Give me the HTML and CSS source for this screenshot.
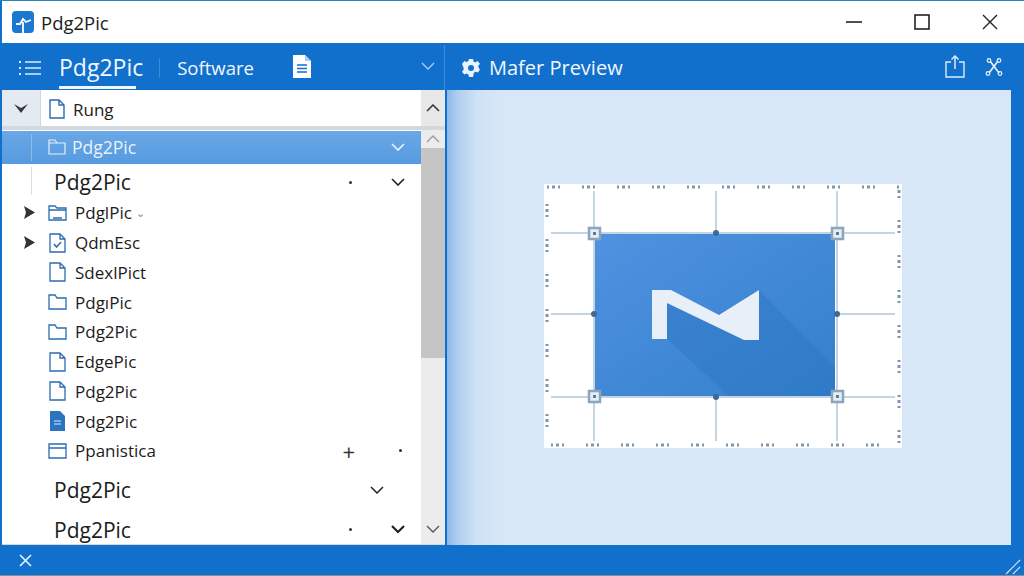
FILE: index.html
```html
<!DOCTYPE html>
<html lang="en">
<head>
    <meta charset="UTF-8">
    <title>Pdg2Pic</title>
    <link rel="stylesheet" href="styles.css">
</head>
<body>
<div class="window">
    <div class="titlebar">
        <svg class="app-logo" width="22" height="22" viewBox="0 0 22 22">
            <rect width="22" height="22" rx="4" fill="#1a78d0"/>
            <path d="M4 13h4l3-5 3 3 5-2M11 11v11" fill="none" stroke="#fff" stroke-width="1.800"/>
        </svg>
        <span class="app-name">Pdg2Pic</span>
        <div class="win-buttons">
            <svg width="16" height="16" viewBox="0 0 16 16"><path d="M0 8h16" stroke="#222" stroke-width="1.6"/></svg>
            <svg width="16" height="16" viewBox="0 0 16 16"><rect x="1" y="1" width="14" height="14" fill="none" stroke="#222" stroke-width="1.6"/></svg>
            <svg width="16" height="16" viewBox="0 0 16 16"><path d="M1 1l14 14M15 1L1 15" stroke="#222" stroke-width="1.4"/></svg>
        </div>
    </div>

    <div class="toolbar">
        <div class="tools-left">
            <svg class="list-icon" width="24" height="18" viewBox="0 0 24 18">
                <path d="M7 3h16M7 9h16M7 15h16" stroke="#dcebfa" stroke-width="1.6"/>
                <path d="M1 3h2M1 9h2M1 15h2" stroke="#dcebfa" stroke-width="2.2"/>
            </svg>
            <span class="tab tab-active">Pdg2Pic</span>
            <span class="tab-sep"></span>
            <span class="tab">Software</span>
            <svg class="doc-icon" width="18" height="23" viewBox="0 0 18 23">
                <path d="M0 0h12l6 6v17H0z" fill="#fff"/>
                <path d="M12 0v6h6" fill="#a9cdf0"/>
                <path d="M4 10h10M4 13.5h10M4 17h10" stroke="#1170cc" stroke-width="1.3"/>
            </svg>
            <svg class="tools-chevron" width="14" height="8" viewBox="0 0 14 8"><path d="M1 1l6 6 6-6" fill="none" stroke="#a9cdf0" stroke-width="1.4"/></svg>
        </div>
        <div class="tools-right">
            <svg width="18" height="18" viewBox="0 0 18 18">
                <path d="M7 0h4l.5 2.600 1.800.8L15.500 2l2.500 2.800-1.700 2 .3 2 1.400 1.800-2 3-2.500-.8-1.600 1L11 18H7l-.6-2.600-1.700-.9-2.400 1L0 12.800l1.600-2v-2L0 5l2.300-3 2.400 1 1.700-.9z" fill="#eaf3fc"/>
                <circle cx="9" cy="9" r="3" fill="#1170cc"/>
            </svg>
            <span class="preview-title">Mafer Preview</span>
            <div class="preview-tools">
                <svg width="20" height="23" viewBox="0 0 20 23">
                    <path d="M6 7H1v15h18V7h-5" fill="none" stroke="#dcebfa" stroke-width="1.4"/>
                    <path d="M10 14V1M6.500 4.500L10 1l3.500 3.500" fill="none" stroke="#dcebfa" stroke-width="1.500"/>
                </svg>
                <svg width="18" height="18" viewBox="0 0 18 18">
                    <path d="M5 3l9 12M13 3L4 15" stroke="#eaf3fc" stroke-width="1.600"/>
                    <circle cx="4" cy="2.500" r="1.800" fill="none" stroke="#eaf3fc" stroke-width="1.200"/>
                    <circle cx="14" cy="2.500" r="1.800" fill="none" stroke="#eaf3fc" stroke-width="1.200"/>
                    <circle cx="3" cy="15.500" r="1.800" fill="none" stroke="#eaf3fc" stroke-width="1.200"/>
                    <circle cx="15" cy="15.500" r="1.800" fill="none" stroke="#eaf3fc" stroke-width="1.200"/>
                </svg>
            </div>
        </div>
    </div>

    <div class="main">
        <div class="left-pane">
            <div class="path-row">
                <div class="path-arrow">
                    <svg width="14" height="9" viewBox="0 0 14 9"><path d="M0 0l7 4 7-4-7 9z" fill="#3a3a3a"/></svg>
                </div>
                <div class="path-field">
                    <svg width="16" height="20" viewBox="0 0 16 20"><path d="M1 1h9l5 5v13H1z M10 1v5h5" fill="none" stroke="#2c6cb0" stroke-width="1.400"/></svg>
                    <span>Rung</span>
                </div>
                <div class="path-scroll">
                    <svg width="14" height="8" viewBox="0 0 14 8"><path d="M1 7l6-6 6 6" fill="none" stroke="#333" stroke-width="1.500"/></svg>
                </div>
            </div>

            <div class="list-area">
                <div class="file-list">
                    <div class="row-selected">
                        <svg width="18" height="16" viewBox="0 0 18 16"><path d="M1 1h6l2 3h8v11H1zM1 4h8" fill="none" stroke="#e4effa" stroke-width="1.200"/></svg>
                        <span>Pdg2Pic</span>
                        <svg class="chev" width="14" height="8" viewBox="0 0 14 8"><path d="M1 1l6 6 6-6" fill="none" stroke="#eef5fc" stroke-width="1.600"/></svg>
                    </div>
                    <div class="row-big row-first">
                        <span>Pdg2Pic</span>
                        <i class="dot"></i>
                        <svg class="chev" width="14" height="8" viewBox="0 0 14 8"><path d="M1 1l6 6 6-6" fill="none" stroke="#222" stroke-width="1.600"/></svg>
                    </div>

                    <div class="tree">
                        <div class="row">
                            <svg class="caret" width="11" height="13" viewBox="0 0 11 13"><path d="M0 0l11 6.500L0 13l2-6.500z" fill="#333"/></svg>
                            <svg width="19" height="16" viewBox="0 0 19 16"><path d="M1 1h6l2 2h9v12H1zM1 5h17M5 13h9" fill="none" stroke="#2c6cb0" stroke-width="1.300"/></svg>
                            <span>PdglPic</span>
                            <span class="tiny">⌄</span>
                        </div>
                        <div class="row">
                            <svg class="caret" width="11" height="13" viewBox="0 0 11 13"><path d="M0 0l11 6.500L0 13l2-6.500z" fill="#333"/></svg>
                            <svg width="19" height="20" viewBox="0 0 19 20"><path d="M2 1h10l5 5v13H2zM12 1v5h5" fill="none" stroke="#2c6cb0" stroke-width="1.300"/><path d="M6 11l2.500 3L13 9" fill="none" stroke="#2c6cb0" stroke-width="1.500"/></svg>
                            <span>QdmEsc</span>
                        </div>
                        <div class="row">
                            <svg width="19" height="20" viewBox="0 0 19 20"><path d="M2 1h10l5 5v13H2zM12 1v5h5" fill="none" stroke="#2c6cb0" stroke-width="1.300"/></svg>
                            <span>SdexlPict</span>
                        </div>
                        <div class="row">
                            <svg width="19" height="16" viewBox="0 0 19 16"><path d="M1 1h6l2 3h9v11H1z" fill="none" stroke="#2c6cb0" stroke-width="1.300"/></svg>
                            <span>PdgıPic</span>
                        </div>
                        <div class="row">
                            <svg width="19" height="16" viewBox="0 0 19 16"><path d="M1 1h6l2 3h9v11H1z" fill="none" stroke="#2c6cb0" stroke-width="1.300"/></svg>
                            <span>Pdg2Pic</span>
                        </div>
                        <div class="row">
                            <svg width="19" height="20" viewBox="0 0 19 20"><path d="M2 1h10l5 5v13H2zM12 1v5h5" fill="none" stroke="#2c6cb0" stroke-width="1.300"/></svg>
                            <span>EdgePic</span>
                        </div>
                        <div class="row">
                            <svg width="19" height="20" viewBox="0 0 19 20"><path d="M2 1h10l5 5v13H2zM12 1v5h5" fill="none" stroke="#2c6cb0" stroke-width="1.300"/></svg>
                            <span>Pdg2Pic</span>
                        </div>
                        <div class="row">
                            <svg width="19" height="20" viewBox="0 0 19 20"><path d="M2 0h10l5 5v15H2z" fill="#2c74bf"/><path d="M6 10h7M6 13h7" stroke="#dcebfa" stroke-width="1.200"/></svg>
                            <span>Pdg2Pic</span>
                        </div>
                        <div class="row row-last">
                            <svg width="19" height="16" viewBox="0 0 19 16"><path d="M1 1h17v14H1zM1 5h17" fill="none" stroke="#2c6cb0" stroke-width="1.300"/></svg>
                            <span>Ppanistica</span>
                            <span class="plus">+</span>
                            <i class="dot"></i>
                        </div>
                    </div>

                    <div class="row-big row-mid">
                        <span>Pdg2Pic</span>
                        <svg class="chev" width="14" height="8" viewBox="0 0 14 8"><path d="M1 1l6 6 6-6" fill="none" stroke="#222" stroke-width="1.500"/></svg>
                    </div>
                    <div class="row-big row-end">
                        <span>Pdg2Pic</span>
                        <i class="dot"></i>
                        <svg class="chev" width="14" height="9" viewBox="0 0 14 9"><path d="M1 1l6 6 6-6" fill="none" stroke="#222" stroke-width="2.200"/></svg>
                    </div>
                </div>

                <div class="scrollbar">
                    <div class="scroll-up">
                        <svg width="14" height="8" viewBox="0 0 14 8"><path d="M1 7l6-6 6 6" fill="none" stroke="#9a9a9a" stroke-width="1.300"/></svg>
                    </div>
                    <div class="scroll-thumb"></div>
                    <div class="scroll-down">
                        <svg width="14" height="8" viewBox="0 0 14 8"><path d="M1 1l6 6 6-6" fill="none" stroke="#555" stroke-width="1.300"/></svg>
                    </div>
                </div>
            </div>
        </div>

        <div class="preview">
            <svg class="artwork" width="358" height="264" viewBox="0 0 358 264">
                <defs>
                    <linearGradient id="blueFill" x1="0" y1="0" x2="1" y2="1">
                        <stop offset="0" stop-color="#4f92e0"/>
                        <stop offset="1" stop-color="#3380cd"/>
                    </linearGradient>
                </defs>
                <rect width="358" height="264" fill="#fff"/>
                <path d="M7 49h344M7 130h344M7 213h344M50 7v250M172 7v250M293 7v250" stroke="#b3c6d7" stroke-width="1.500"/>
                <path d="M3 3h352v258H3z" fill="none" stroke="#7f97ad" stroke-width="3" stroke-dasharray="2 3 3 3 2 22"/>
                <rect x="51" y="50" width="240" height="162" fill="url(#blueFill)"/>
                <path d="M123 155l62 57h106v-29l-76-77v50h-15l-77-37z" fill="#2b74c0" opacity=".4"/>
                <path d="M108 106h19l48 25 40-25v50h-15l-77-37v36h-15z" fill="#e8eff8"/>
                <g fill="#e6eef5" stroke="#8ba5bd" stroke-width="2.500">
                    <rect x="45" y="44" width="11" height="11"/>
                    <rect x="288" y="44" width="11" height="11"/>
                    <rect x="45" y="207" width="11" height="11"/>
                    <rect x="288" y="207" width="11" height="11"/>
                </g>
                <g fill="#5d7f9f">
                    <rect x="49" y="48" width="3" height="3"/>
                    <rect x="292" y="48" width="3" height="3"/>
                    <rect x="49" y="211" width="3" height="3"/>
                    <rect x="292" y="211" width="3" height="3"/>
                </g>
                <g fill="#3f6a92">
                    <circle cx="172" cy="49" r="3"/>
                    <circle cx="172" cy="213" r="3"/>
                    <circle cx="50" cy="130" r="3"/>
                    <circle cx="293" cy="130" r="3"/>
                </g>
            </svg>
        </div>
    </div>

    <div class="statusbar">
        <svg width="13" height="13" viewBox="0 0 13 13"><path d="M1 1l11 11M12 1L1 12" stroke="#eaf3fc" stroke-width="1.600"/></svg>
        <svg class="grip" width="16" height="16" viewBox="0 0 16 16"><path d="M1 15L15 1M8 15l7-7" stroke="#cfe2f6" stroke-width="1.200"/></svg>
    </div>
</div>
</body>
</html>
```

FILE: styles.css
```css
html, body {
    margin: 0;
    padding: 0;
    height: 100%;
    overflow: hidden;
    font-family: "Open Sans", "Noto Sans", sans-serif;
}
svg {
    display: block;
    flex: none;
}

.window {
    height: 576px;
    box-sizing: border-box;
    display: flex;
    flex-direction: column;
    background: #1170cc;
    border-top: 1px solid #2a86b8;
    border-bottom: 1px solid #7d8fa3;
}

/* title bar */
.titlebar {
    height: 42px;
    flex: none;
    margin-left: 2px;
    background: #fff;
    display: flex;
    align-items: center;
    padding: 0 26px 0 10px;
}
.app-name {
    margin-left: 7px;
    font-size: 18.500px;
    color: #1c1c1c;
}
.win-buttons {
    margin-left: auto;
    display: flex;
    align-items: center;
    gap: 52px;
}

/* blue toolbar */
.toolbar {
    height: 47px;
    flex: none;
    box-sizing: border-box;
    padding-top: 2px;
    display: flex;
    color: #f2f7fd;
}
.tools-left {
    width: 445px;
    flex: none;
    box-sizing: border-box;
    display: flex;
    align-items: center;
    padding-left: 18px;
    border-right: 1px solid #3f8cd6;
}
.list-icon {
    margin-right: 17px;
}
.tab {
    font-size: 18.500px;
    line-height: 45px;
}
.tab-active {
    font-size: 23px;
    position: relative;
}
.tab-active::after {
    content: "";
    position: absolute;
    left: 0;
    right: 7px;
    bottom: 1px;
    height: 3px;
    background: #f2f7fd;
}
.tab-sep {
    width: 1px;
    height: 20px;
    margin: 0 17px 0 16px;
    background: #3f8cd6;
}
.doc-icon {
    margin: 0 0 2px 39px;
}
.tools-chevron {
    margin: 0 9px 4px auto;
}
.tools-right {
    flex: 1;
    display: flex;
    align-items: center;
    padding: 0 21px 0 17px;
}
.preview-title {
    margin-left: 9px;
    font-size: 20px;
}
.preview-tools {
    margin-left: auto;
    display: flex;
    align-items: center;
    gap: 20px;
    margin-bottom: 2px;
}

/* main area */
.main {
    flex: 1;
    min-height: 0;
    display: flex;
    padding: 0 13px 0 2px;
}
.left-pane {
    width: 443px;
    flex: none;
    display: flex;
    flex-direction: column;
    background: #fff;
}
.path-row {
    height: 36px;
    flex: none;
    display: flex;
    border-bottom: 4px solid #d3d8de;
}
.path-arrow {
    width: 38px;
    display: flex;
    align-items: center;
    justify-content: center;
    background: #e3eaf2;
    border-right: 1px solid #cfd6de;
}
.path-field {
    flex: 1;
    display: flex;
    align-items: center;
    gap: 8px;
    padding: 2px 0 0 8px;
    font-size: 17px;
    color: #222;
}
.path-scroll {
    width: 24px;
    display: flex;
    align-items: center;
    justify-content: center;
    background: #e8e8e8;
}

.list-area {
    flex: 1;
    min-height: 0;
    display: flex;
    border-bottom: 1px solid #d5d8dc;
}
.file-list {
    flex: 1;
    min-width: 0;
    overflow: hidden;
    color: #1c1c1c;
}
.row-selected {
    height: 32px;
    margin-top: 1px;
    padding: 0 16px 1px 46px;
    display: flex;
    align-items: center;
    background: linear-gradient(#6aa8e6, #569ae0);
    color: #e9f2fb;
    font-size: 17.500px;
    position: relative;
}
.row-selected span {
    margin-left: 6px;
}
.row-selected .chev {
    margin-left: auto;
}
.row-selected::before, .row-first::before {
    content: "";
    position: absolute;
    left: 29px;
    top: 3px;
    bottom: 3px;
    width: 1px;
    background: #8fbbea;
}
.row-first::before {
    background: #d8dee6;
}
.row-big {
    display: flex;
    align-items: center;
    padding-left: 52px;
    font-size: 21px;
    position: relative;
}
.row-first {
    height: 32px;
    padding-top: 2px;
    padding-right: 16px;
}
.row-mid {
    height: 40px;
    margin-top: 4px;
    padding-right: 37px;
}
.row-end {
    height: 40px;
    padding-right: 16px;
}
.row-big .chev {
    margin-left: auto;
}
.row-big .dot {
    margin-left: auto;
}
.row-big .dot + .chev {
    margin-left: 39px;
}
.dot {
    width: 3px;
    height: 3px;
    border-radius: 50%;
    background: #333;
    flex: none;
}
.row {
    height: 29.750px;
    position: relative;
    display: flex;
    align-items: center;
    gap: 8px;
    padding-left: 46px;
    font-size: 17px;
}
.caret {
    position: absolute;
    left: 22px;
    top: 8px;
}
.tiny {
    margin-left: -4px;
    font-size: 11px;
    color: #888;
}
.row-last .plus {
    margin-left: auto;
    font-size: 22px;
    line-height: 1;
    color: #333;
}
.row-last .dot {
    margin: 0 19px 0 36px;
}

/* scrollbar */
.scrollbar {
    width: 24px;
    flex: none;
    display: flex;
    flex-direction: column;
    background: #ececec;
}
.scroll-up {
    height: 18px;
    display: flex;
    align-items: center;
    justify-content: center;
}
.scroll-thumb {
    height: 210px;
    background: #c5c5c5;
}
.scroll-down {
    margin-top: auto;
    height: 30px;
    display: flex;
    align-items: center;
    justify-content: center;
}

/* preview pane */
.preview {
    flex: 1;
    margin-left: 2px;
    display: flex;
    align-items: center;
    justify-content: center;
    padding: 0 12px 3px 0;
    background: linear-gradient(90deg, #8ab8ea 0, #aecdf0 10px, #cfe2f6 30px, #d7e7f8 55px);
}
.artwork {
    filter: blur(0.6px);
}

/* status bar */
.statusbar {
    height: 30px;
    flex: none;
    display: flex;
    align-items: center;
    justify-content: space-between;
    padding: 0 3px 0 19px;
}
.grip {
    align-self: flex-end;
}
```
